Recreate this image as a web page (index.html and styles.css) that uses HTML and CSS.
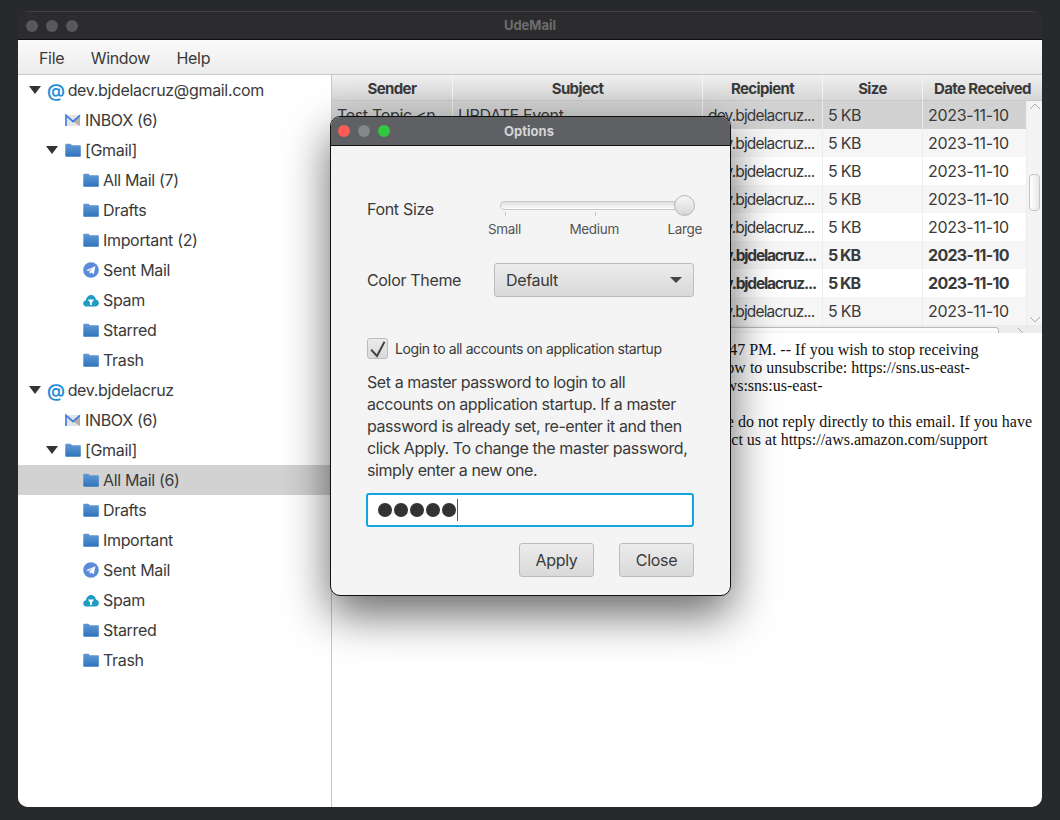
FILE: index.html
```html
<!DOCTYPE html>
<html>
<head>
    <meta charset="utf-8">
    <title>UdeMail</title>
    <link rel="stylesheet" href="styles.css">
</head>

<body>
    <svg class="icon-defs" width="0" height="0">
        <defs>
            <linearGradient id="folder-fill" x1="0" y1="0" x2="0" y2="1">
                <stop offset="0" stop-color="#6199d6"/>
                <stop offset="1" stop-color="#2f73ba"/>
            </linearGradient>
            <symbol id="folder" viewBox="0 0 16 16">
                <path d="M0.3 4V2.8C0.3 2.2 .8 1.8 1.3 1.8H5.5L7 3.2H14.7C15.4 3.2 15.8 3.7 15.8 4.3V13.8C15.8 14.4 15.4 14.8 14.7 14.8H1.4C.8 14.8 .3 14.4 .3 13.8Z" fill="url(#folder-fill)"/>
            </symbol>
            <symbol id="gmail" viewBox="0 0 16 16">
                <path d="M1 3H15V14H1Z" fill="#e3e4e6"/>
                <path d="M15 3L8 9.5L15 14Z" fill="#b5b0a4"/>
                <path d="M1 14V3.4L8 9.5L15 3.4" fill="none" stroke="#3f7fe0" stroke-width="1.7"/>
            </symbol>
            <symbol id="sent" viewBox="0 0 16 16">
                <circle cx="8" cy="8" r="7.8" fill="#5a8bd8"/>
                <path d="M3 8.2L12.4 4.2L10.8 12.2L8.2 10.4L6.8 11.8L6.4 9.4L10.4 5.8L5.4 8.9Z" fill="#fff"/>
            </symbol>
            <symbol id="spam" viewBox="0 0 16 16">
                <path d="M4 14.6C1.8 14.6 .2 13.2 .2 11.4C.2 9.8 1.4 8.6 2.9 8.3C3.3 5.6 5.4 3 8 3C10.5 3 12.4 5 13 7.5C14.7 7.8 15.9 9.2 15.9 11C15.9 13 14.3 14.6 12.2 14.6Z" fill="#1f9bc4"/>
                <path d="M4.8 7.6H11.2L8.9 10.4V13H7.1V10.4Z" fill="#fff"/>
            </symbol>
        </defs>
    </svg>

    <div class="window">
        <div class="titlebar">
            <div class="lights">
                <span class="light"></span>
                <span class="light"></span>
                <span class="light"></span>
            </div>
            <span class="titlebar-text">UdeMail</span>
        </div>

        <div class="menubar">
            <span>File</span>
            <span>Window</span>
            <span>Help</span>
        </div>

        <div class="main">
            <div class="tree">
                <div class="tree-row lvl-0"><span class="arrow"></span><span class="at">@</span>dev.bjdelacruz@gmail.com</div>
                <div class="tree-row lvl-1"><svg class="tree-icon"><use href="#gmail"/></svg>INBOX (6)</div>
                <div class="tree-row lvl-1b"><span class="arrow"></span><svg class="tree-icon"><use href="#folder"/></svg>[Gmail]</div>
                <div class="tree-row lvl-2"><svg class="tree-icon"><use href="#folder"/></svg>All Mail (7)</div>
                <div class="tree-row lvl-2"><svg class="tree-icon"><use href="#folder"/></svg>Drafts</div>
                <div class="tree-row lvl-2"><svg class="tree-icon"><use href="#folder"/></svg>Important (2)</div>
                <div class="tree-row lvl-2"><svg class="tree-icon"><use href="#sent"/></svg>Sent Mail</div>
                <div class="tree-row lvl-2"><svg class="tree-icon"><use href="#spam"/></svg>Spam</div>
                <div class="tree-row lvl-2"><svg class="tree-icon"><use href="#folder"/></svg>Starred</div>
                <div class="tree-row lvl-2"><svg class="tree-icon"><use href="#folder"/></svg>Trash</div>
                <div class="tree-row lvl-0"><span class="arrow"></span><span class="at">@</span>dev.bjdelacruz</div>
                <div class="tree-row lvl-1"><svg class="tree-icon"><use href="#gmail"/></svg>INBOX (6)</div>
                <div class="tree-row lvl-1b"><span class="arrow"></span><svg class="tree-icon"><use href="#folder"/></svg>[Gmail]</div>
                <div class="tree-row lvl-2 selected"><svg class="tree-icon"><use href="#folder"/></svg>All Mail (6)</div>
                <div class="tree-row lvl-2"><svg class="tree-icon"><use href="#folder"/></svg>Drafts</div>
                <div class="tree-row lvl-2"><svg class="tree-icon"><use href="#folder"/></svg>Important</div>
                <div class="tree-row lvl-2"><svg class="tree-icon"><use href="#sent"/></svg>Sent Mail</div>
                <div class="tree-row lvl-2"><svg class="tree-icon"><use href="#spam"/></svg>Spam</div>
                <div class="tree-row lvl-2"><svg class="tree-icon"><use href="#folder"/></svg>Starred</div>
                <div class="tree-row lvl-2"><svg class="tree-icon"><use href="#folder"/></svg>Trash</div>
            </div>

            <div class="content">
                <div class="table-wrap">
                    <div class="table-head">
                        <div class="cell col-sender">Sender</div>
                        <div class="cell col-subject">Subject</div>
                        <div class="cell col-recipient">Recipient</div>
                        <div class="cell col-size">Size</div>
                        <div class="cell col-date">Date Received</div>
                    </div>
                    <div class="table-body">
                        <div class="rows">
                            <div class="row row-selected">
                                <div class="cell col-sender">Test Topic &lt;n...</div>
                                <div class="cell col-subject">UPDATE Event</div>
                                <div class="cell col-recipient">dev.bjdelacruz...</div>
                                <div class="cell col-size">5 KB</div>
                                <div class="cell col-date">2023-11-10</div>
                            </div>
                            <div class="row row-even">
                                <div class="cell col-sender"></div>
                                <div class="cell col-subject"></div>
                                <div class="cell col-recipient">dev.bjdelacruz...</div>
                                <div class="cell col-size">5 KB</div>
                                <div class="cell col-date">2023-11-10</div>
                            </div>
                            <div class="row">
                                <div class="cell col-sender"></div>
                                <div class="cell col-subject"></div>
                                <div class="cell col-recipient">dev.bjdelacruz...</div>
                                <div class="cell col-size">5 KB</div>
                                <div class="cell col-date">2023-11-10</div>
                            </div>
                            <div class="row row-even">
                                <div class="cell col-sender"></div>
                                <div class="cell col-subject"></div>
                                <div class="cell col-recipient">dev.bjdelacruz...</div>
                                <div class="cell col-size">5 KB</div>
                                <div class="cell col-date">2023-11-10</div>
                            </div>
                            <div class="row">
                                <div class="cell col-sender"></div>
                                <div class="cell col-subject"></div>
                                <div class="cell col-recipient">dev.bjdelacruz...</div>
                                <div class="cell col-size">5 KB</div>
                                <div class="cell col-date">2023-11-10</div>
                            </div>
                            <div class="row row-even row-unread">
                                <div class="cell col-sender"></div>
                                <div class="cell col-subject"></div>
                                <div class="cell col-recipient">dev.bjdelacruz...</div>
                                <div class="cell col-size">5 KB</div>
                                <div class="cell col-date">2023-11-10</div>
                            </div>
                            <div class="row row-unread">
                                <div class="cell col-sender"></div>
                                <div class="cell col-subject"></div>
                                <div class="cell col-recipient">dev.bjdelacruz...</div>
                                <div class="cell col-size">5 KB</div>
                                <div class="cell col-date">2023-11-10</div>
                            </div>
                            <div class="row row-even">
                                <div class="cell col-sender"></div>
                                <div class="cell col-subject"></div>
                                <div class="cell col-recipient">dev.bjdelacruz...</div>
                                <div class="cell col-size">5 KB</div>
                                <div class="cell col-date">2023-11-10</div>
                            </div>
                        </div>
                        <div class="vscroll">
                            <svg class="scroll-arrow" viewBox="0 0 12 7"><path d="M1 6L6 1L11 6" fill="none" stroke="#a9a9a9" stroke-width="1"/></svg>
                            <div class="vscroll-thumb"></div>
                            <svg class="scroll-arrow" viewBox="0 0 12 7"><path d="M1 1L6 6L11 1" fill="none" stroke="#a9a9a9" stroke-width="1"/></svg>
                        </div>
                    </div>
                    <div class="hscroll">
                        <div class="hscroll-thumb"></div>
                        <svg class="hscroll-arrow" viewBox="0 0 7 12"><path d="M1 1L6 6L1 11" fill="none" stroke="#a9a9a9" stroke-width="1"/></svg>
                    </div>
                </div>

                <div class="message">
                    <p class="msg-block">A test notification that was sent to you on 2023-11-10, at 11:47 PM. -- If you wish to stop receiving<br>
                    notifications from this topic, please just click on the link below to unsubscribe: https://sns.us-east-<br>
                    1.amazonaws.com/unsubscribe.html/SubscriptionArn=arn:aws:sns:us-east-</p>
                    <p class="msg-block">It is an automated message from the Amazon SNS, so, please do not reply directly to this email. If you have<br>
                    questions about this notification or your AWS account, contact us at https://aws.amazon.com/support</p>
                </div>
            </div>
        </div>
    </div>

    <!-- options dialog floats over the main window -->
    <div class="dialog">
        <div class="dialog-title">
            <div class="lights">
                <span class="light red"></span>
                <span class="light grey"></span>
                <span class="light green"></span>
            </div>
            <span class="dialog-title-text">Options</span>
        </div>
        <div class="dialog-body">
            <div class="opt-row font-row">
                <span class="opt-label">Font Size</span>
                <div class="slider">
                    <div class="slider-track"></div>
                    <div class="slider-thumb"></div>
                    <div class="slider-ticks">
                        <span class="tick"></span>
                        <span class="tick"></span>
                        <span class="tick"></span>
                    </div>
                    <div class="slider-labels">
                        <span>Small</span>
                        <span>Medium</span>
                        <span>Large</span>
                    </div>
                </div>
            </div>
            <div class="opt-row theme-row">
                <span class="opt-label">Color Theme</span>
                <div class="combo">Default<span class="combo-arrow"></span></div>
            </div>
            <div class="check-row">
                <span class="checkbox">
                    <svg viewBox="0 0 20 20" width="20" height="20"><path d="M3.2 10.8L9 17L16.5 2.8" fill="none" stroke="#444" stroke-width="2"/></svg>
                </span>
                <span class="check-label">Login to all accounts on application startup</span>
            </div>
            <p class="help">Set a master password to login to all accounts on application startup. If a master password is already set, re-enter it and then click Apply. To change the master password, simply enter a new one.</p>
            <div class="password">
                <span class="dot"></span><span class="dot"></span><span class="dot"></span><span class="dot"></span><span class="dot"></span><span class="caret"></span>
            </div>
            <div class="buttons">
                <div class="btn">Apply</div>
                <div class="btn">Close</div>
            </div>
        </div>
    </div>
</body>
</html>
```

FILE: styles.css
```css
* {
    box-sizing: border-box;
}

html, body {
    height: 100%;
}

body {
    background: #28292d;
    color: #3a3a3a;
    font-family: Inter, "Liberation Sans", sans-serif;
    font-size: 16px;
    letter-spacing: -0.33px;
    margin: 0;
    overflow: hidden;
    padding: 11px 18px 13px;
    position: relative;
}

.icon-defs {
    display: block;
    height: 0;
}

.window {
    background: #2c2c2f;
    border-radius: 10px;
    display: flex;
    flex-direction: column;
    height: 796px;
    overflow: hidden;
}

.titlebar {
    align-items: center;
    background: #2c2c2f;
    border-bottom: 1px solid #0e0e0e;
    border-top: 1px solid #434346;
    display: flex;
    flex: none;
    height: 29px;
    justify-content: center;
    padding-bottom: 2px;
    position: relative;
}
.titlebar-text {
    color: #6c6c6e;
    font-size: 13px;
    font-weight: 700;
    letter-spacing: 0;
}

.lights {
    display: flex;
    gap: 8px;
    left: 8px;
    position: absolute;
    top: 8px;
}
.light {
    background: #58585b;
    border-radius: 50%;
    height: 12px;
    width: 12px;
}
.light.red {
    background: #fc5c55;
}
.light.grey {
    background: #85868b;
}
.light.green {
    background: #31c73f;
}

.menubar {
    align-items: center;
    background: linear-gradient(#fafafa, #ececec);
    border-bottom: 1px solid #c9c9c9;
    display: flex;
    flex: none;
    gap: 26.5px;
    height: 35px;
    padding: 1px 0 0 21px;
}

.main {
    background: #fff;
    display: flex;
    flex: 1;
    min-height: 0;
}

.tree {
    background: #fff;
    border-right: 1px solid #c8c8c8;
    flex: none;
    width: 314px;
}
.tree-row {
    align-items: center;
    display: flex;
    height: 30px;
    white-space: nowrap;
}
.tree-row.selected {
    background: #d2d2d2;
}
.lvl-0 {
    padding-left: 11px;
}
.lvl-1 {
    padding-left: 47px;
}
.lvl-1b {
    padding-left: 28px;
}
.lvl-2 {
    padding-left: 65px;
}

.arrow {
    border-left: 6px solid transparent;
    border-right: 6px solid transparent;
    border-top: 8px solid #333;
    flex: none;
    height: 0;
    margin-right: 7px;
    width: 0;
}
.lvl-0 .arrow {
    margin-right: 6px;
}
.at {
    color: #1f8ed6;
    font-size: 18px;
    font-weight: 600;
    margin-right: 3px;
}
.tree-icon {
    flex: none;
    height: 16px;
    margin-right: 4px;
    width: 16px;
}

.content {
    display: flex;
    flex: 1;
    flex-direction: column;
    min-width: 0;
}

.table-wrap {
    background: #ececec;
    flex: none;
    height: 258px;
    overflow: hidden;
}
.table-head {
    background: linear-gradient(#f0f0f0, #d6d6d6);
    border-bottom: 1px solid #c9c9c9;
    display: flex;
    font-size: 15px;
    font-weight: 700;
    height: 26px;
    letter-spacing: -0.62px;
}
.table-head .cell {
    align-items: center;
    border-right: 1px solid #f4f4f4;
    display: flex;
    justify-content: center;
    padding: 1px 0 0;
}
.table-body {
    background: #f4f4f4;
    display: flex;
}
.rows {
    flex: none;
    width: 695px;
}
.row {
    background: #fff;
    display: flex;
    height: 28px;
}
.row-even {
    background: #f6f6f6;
}
.row-selected {
    background: #d2d2d2;
}
.row-unread {
    font-weight: 700;
}
.cell {
    align-items: center;
    border-right: 1px solid #ececec;
    display: flex;
    flex: none;
    overflow: hidden;
    padding-left: 5px;
    white-space: nowrap;
}
.col-sender {
    width: 121px;
}
.col-subject {
    width: 250px;
}
.col-recipient {
    width: 120px;
}
.col-size {
    width: 100px;
}
.col-date {
    width: 120px;
}
.rows .col-date {
    letter-spacing: -0.3px;
    width: 104px;
}
.rows .col-size {
    letter-spacing: -0.7px;
}
.rows .col-recipient {
    font-size: 15.5px;
    letter-spacing: -0.85px;
}
.row-unread .cell.col-date {
    letter-spacing: -0.7px;
}
.row-unread .cell.col-recipient {
    letter-spacing: -1.2px;
}
.row-unread .cell.col-size {
    letter-spacing: -1px;
}

.vscroll {
    align-items: center;
    background: #f4f4f4;
    display: flex;
    flex: 1;
    flex-direction: column;
    height: 224px;
    justify-content: space-between;
    padding: 2px 0 2px;
    position: relative;
}
.scroll-arrow {
    height: 7px;
    width: 12px;
}
.vscroll-thumb {
    background: linear-gradient(90deg, #fff, #e8e8e8);
    border: 1px solid #c4c4c4;
    border-radius: 4px;
    height: 37px;
    left: 2px;
    position: absolute;
    top: 73px;
    width: 11px;
}

.hscroll {
    display: flex;
    height: 8px;
    justify-content: space-between;
    padding: 2px 18px 0 0;
}
.hscroll-thumb {
    background: linear-gradient(#fff, #e8e8e8);
    border: 1px solid #b9b9b9;
    border-radius: 3px;
    height: 14px;
    width: 667px;
}
.hscroll-arrow {
    flex: none;
    height: 12px;
    width: 7px;
}

.message {
    color: #111;
    flex: 1;
    font-family: "Liberation Serif", serif;
    font-size: 16px;
    letter-spacing: 0;
    line-height: 18px;
    padding: 8px 0 0 10px;
    white-space: nowrap;
}
.msg-block {
    margin: 0 0 18px;
}

.dialog {
    background: #f4f4f4;
    border: 1px solid #111;
    border-radius: 10px;
    box-shadow: 0 18px 46px rgba(0, 0, 0, 0.6);
    height: 480px;
    left: 330px;
    overflow: hidden;
    position: absolute;
    top: 116px;
    width: 401px;
}
.dialog-title {
    align-items: center;
    background: #5f6064;
    border-bottom: 1px solid #111;
    display: flex;
    height: 29px;
    justify-content: center;
    padding-bottom: 1px;
    position: relative;
}
.dialog-title .lights {
    left: 7px;
}
.dialog-title-text {
    color: #d4d4d6;
    font-size: 13px;
    font-weight: 700;
    letter-spacing: 0;
    margin-right: 3px;
}
.dialog-body {
    display: flex;
    flex-direction: column;
    padding: 0 36px;
}

.opt-row {
    align-items: center;
    display: flex;
}
.opt-label {
    flex: none;
    width: 127px;
}
.font-row {
    height: 68px;
    margin-top: 29px;
}

.slider {
    flex: none;
    height: 50px;
    margin-left: 6px;
    position: relative;
    width: 206px;
}
.slider-track {
    background: linear-gradient(#dedede, #fdfdfd);
    border: 1px solid #c8c8c8;
    border-radius: 4px;
    height: 9px;
    left: 0;
    position: absolute;
    top: 17px;
    width: 186px;
}
.slider-thumb {
    background: linear-gradient(#f6f6f6, #d8d8d8);
    border: 1px solid #b4b4b4;
    border-radius: 50%;
    height: 21px;
    left: 174px;
    position: absolute;
    top: 11px;
    width: 21px;
}
.slider-ticks {
    display: flex;
    justify-content: space-between;
    left: 5px;
    position: absolute;
    top: 28px;
    width: 180px;
}
.tick {
    background: #c8c8c8;
    height: 4px;
    width: 1px;
}
.slider-labels {
    color: #555;
    display: flex;
    font-size: 13.5px;
    justify-content: space-between;
    left: -12px;
    position: absolute;
    top: 37px;
    width: 214px;
}

.theme-row {
    height: 34px;
    margin-top: 20px;
}
.combo {
    align-items: center;
    background: linear-gradient(#ececec, #d9d9d9);
    border: 1px solid #bcbcbc;
    border-radius: 3px;
    display: flex;
    height: 34px;
    justify-content: space-between;
    padding: 0 11px;
    width: 200px;
}
.combo-arrow {
    border-left: 6px solid transparent;
    border-right: 6px solid transparent;
    border-top: 6px solid #444;
}

.check-row {
    align-items: center;
    display: flex;
    gap: 7px;
    height: 22px;
    margin-top: 40px;
}
.checkbox {
    background: linear-gradient(#ececec, #d9d9d9);
    border: 1px solid #bcbcbc;
    border-radius: 3px;
    height: 21px;
    overflow: hidden;
    width: 21px;
}
.checkbox svg {
    display: block;
}
.check-label {
    font-size: 14px;
    letter-spacing: -0.4px;
}

.help {
    letter-spacing: -0.42px;
    line-height: 22px;
    margin: 12px 0 0;
}

.password {
    align-items: center;
    background: #fff;
    border: 2px solid #13a6de;
    border-radius: 3px;
    display: flex;
    gap: 2px;
    height: 34px;
    margin: 12px 0 0 -1px;
    padding-left: 10px;
    width: 328px;
}
.dot {
    background: #333;
    border-radius: 50%;
    height: 14px;
    width: 14px;
}
.caret {
    background: #555;
    height: 22px;
    margin-left: -1px;
    width: 1px;
}

.buttons {
    display: flex;
    gap: 25px;
    justify-content: flex-end;
    margin: 16px 0 0 -1px;
    width: 328px;
}
.btn {
    align-items: center;
    background: linear-gradient(#ececec, #d9d9d9);
    border: 1px solid #bcbcbc;
    border-radius: 3px;
    display: flex;
    height: 34px;
    justify-content: center;
    width: 75px;
}
```
